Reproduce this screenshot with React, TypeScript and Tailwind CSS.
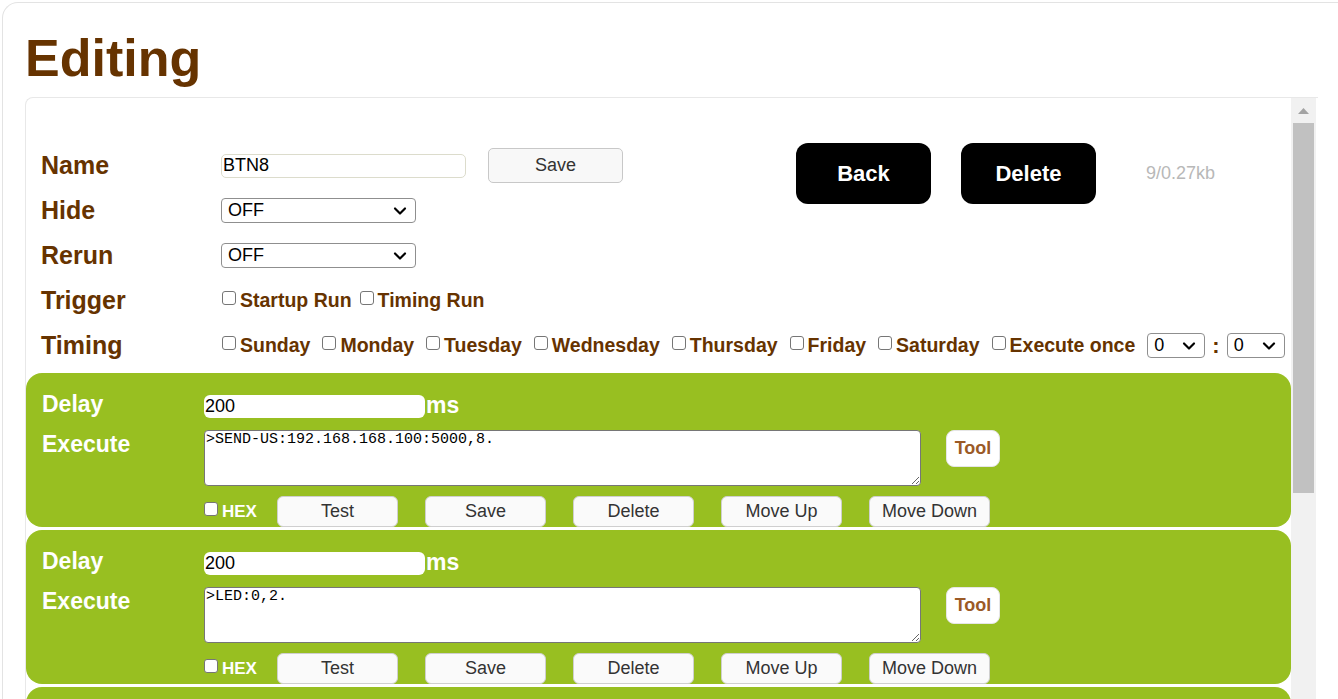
import { ChevronDown } from "lucide-react";

const brown = "text-[#663300]";

function FakeSelect({ value, width }: { value: string; width: string }) {
  return (
    <div
      className={`flex h-[25px] items-center justify-between rounded-[4px] border border-[#8f8f8f] bg-white pl-[6px] pr-[5px] text-[18px] text-black ${width}`}
    >
      <span>{value}</span>
      <ChevronDown size={20} strokeWidth={2.6} className="text-black" />
    </div>
  );
}

function Box() {
  return (
    <span className="relative -top-[3px] mr-[4px] inline-block h-[14px] w-[14px] shrink-0 rounded-[3px] border border-[#767676] bg-white" />
  );
}

function Check({ label }: { label: string }) {
  return (
    <label className="flex items-center font-bold">
      <Box />
      {label}
    </label>
  );
}

function Row({ label, children }: { label: string; children: React.ReactNode }) {
  return (
    <div className="flex h-[45px] items-center">
      <div className={`w-[180px] text-[25px] font-bold ${brown}`}>{label}</div>
      {children}
    </div>
  );
}

function StepButton({ children }: { children: React.ReactNode }) {
  return (
    <button className="h-[31px] w-[121px] rounded-[6px] border border-[#cfcfcf] bg-[#fafafa] text-[18px] text-[#333]">
      {children}
    </button>
  );
}

function Step({ command }: { command: string }) {
  return (
    <div className="rounded-[16px] bg-[#98bf21] pl-[16px] pt-[22px] text-white">
      <div className="flex h-[23px] items-center">
        <div className="w-[162px] -translate-y-[2px] text-[23px] font-bold">Delay</div>
        <input
          defaultValue="200"
          className="h-[23px] w-[221px] rounded-[6px] bg-white px-[1px] text-[18px] text-black outline-none"
        />
        <span className="ml-[1px] -translate-y-[1px] text-[23px] font-bold">ms</span>
      </div>
      <div className="mt-[12px] flex items-start">
        <div className="w-[162px] text-[23px] font-bold leading-[28px]">Execute</div>
        <textarea
          defaultValue={command}
          className="h-[56px] w-[717px] rounded-[4px] border border-[#767676] bg-white px-[1px] font-['Liberation_Mono',monospace] text-[15px] leading-[18px] text-black outline-none"
        />
        <button className="ml-[25px] h-[37px] w-[54px] rounded-[8px] border border-[#e6e6e6] bg-white text-[18px] font-bold text-[#9b5a26]">
          Tool
        </button>
      </div>
      <div className="mt-[10px] flex items-center pl-[162px]">
        <label className="flex w-[73px] items-center text-[17px] font-bold">
          <Box />
          HEX
        </label>
        <div className="flex gap-[27px]">
          <StepButton>Test</StepButton>
          <StepButton>Save</StepButton>
          <StepButton>Delete</StepButton>
          <StepButton>Move Up</StepButton>
          <StepButton>Move Down</StepButton>
        </div>
      </div>
    </div>
  );
}

export default function App() {
  return (
    <div className="h-[699px] w-[1338px] overflow-hidden bg-white font-['Liberation_Sans',Arial,sans-serif]">
      <div className="ml-[2px] mt-[2px] w-[1360px] rounded-tl-[16px] border-l border-t border-[#e3e3e3] px-[22px] pt-[29px]">
        <h1 className={`mb-[13px] text-[52px] font-bold leading-[52px] ${brown}`}>Editing</h1>

        <div className="flex w-[1293px] rounded-tl-[8px] border-l border-t border-[#e8e8e8]">
          <div className="w-[1265px]">
            <div className="pl-[15px] pt-[45px]">
              <div className="flex items-start">
                <div className="w-[755px]">
                  <Row label="Name">
                    <input
                      defaultValue="BTN8"
                      className="h-[24px] w-[245px] rounded-[5px] border border-[#dcdccc] px-[1px] text-[18px] text-black outline-none"
                    />
                    <button className="ml-[22px] h-[35px] w-[135px] rounded-[5px] border border-[#c8c8c8] bg-[#f8f8f8] text-[18px] text-[#333]">
                      Save
                    </button>
                  </Row>
                  <Row label="Hide">
                    <FakeSelect value="OFF" width="w-[195px]" />
                  </Row>
                  <Row label="Rerun">
                    <FakeSelect value="OFF" width="w-[195px]" />
                  </Row>
                </div>
                <div className="flex items-center">
                  <button className="h-[61px] w-[135px] rounded-[12px] bg-black text-[22px] font-bold text-white">
                    Back
                  </button>
                  <button className="ml-[30px] h-[61px] w-[135px] rounded-[12px] bg-black text-[22px] font-bold text-white">
                    Delete
                  </button>
                  <span className="ml-[50px] text-[18px] text-[#b8b8b8]">9/0.27kb</span>
                </div>
              </div>
              <Row label="Trigger">
                <div className={`flex gap-[8px] pl-[1px] text-[19.5px] ${brown}`}>
                  <Check label="Startup Run" />
                  <Check label="Timing Run" />
                </div>
              </Row>
              <Row label="Timing">
                <div className={`flex items-center gap-[12px] pl-[1px] text-[19.5px] ${brown}`}>
                  <Check label="Sunday" />
                  <Check label="Monday" />
                  <Check label="Tuesday" />
                  <Check label="Wednesday" />
                  <Check label="Thursday" />
                  <Check label="Friday" />
                  <Check label="Saturday" />
                  <Check label="Execute once" />
                  <div className="flex items-center">
                    <FakeSelect value="0" width="w-[58px]" />
                    <span className="mx-[7px] text-[22px] font-bold">:</span>
                    <FakeSelect value="0" width="w-[58px]" />
                  </div>
                </div>
              </Row>
            </div>

            <div className="mt-[5px] flex flex-col gap-[3px]">
              <Step command=">SEND-US:192.168.168.100:5000,8." />
              <Step command=">LED:0,2." />
              <div className="h-[160px] rounded-[16px] bg-[#98bf21]" />
            </div>
          </div>

          <div className="flex w-[25px] flex-col items-center bg-[#f1f1f1]">
            <div className="flex h-[25px] items-center justify-center">
              <svg width="11" height="6" viewBox="0 0 11 6">
                <path d="M5.5 0 L11 6 L0 6 Z" fill="#a3a3a3" />
              </svg>
            </div>
            <div className="h-[370px] w-[21px] bg-[#c1c1c1]" />
          </div>
        </div>
      </div>
    </div>
  );
}
